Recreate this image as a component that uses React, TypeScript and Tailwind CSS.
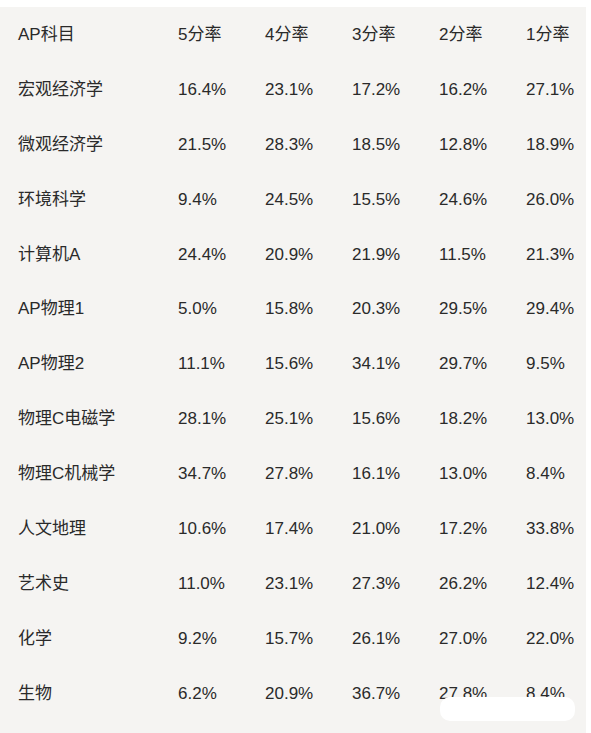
import React from "react";

const header = ["AP科目", "5分率", "4分率", "3分率", "2分率", "1分率"];
const rows: string[][] = [
  ["宏观经济学", "16.4%", "23.1%", "17.2%", "16.2%", "27.1%"],
  ["微观经济学", "21.5%", "28.3%", "18.5%", "12.8%", "18.9%"],
  ["环境科学", "9.4%", "24.5%", "15.5%", "24.6%", "26.0%"],
  ["计算机A", "24.4%", "20.9%", "21.9%", "11.5%", "21.3%"],
  ["AP物理1", "5.0%", "15.8%", "20.3%", "29.5%", "29.4%"],
  ["AP物理2", "11.1%", "15.6%", "34.1%", "29.7%", "9.5%"],
  ["物理C电磁学", "28.1%", "25.1%", "15.6%", "18.2%", "13.0%"],
  ["物理C机械学", "34.7%", "27.8%", "16.1%", "13.0%", "8.4%"],
  ["人文地理", "10.6%", "17.4%", "21.0%", "17.2%", "33.8%"],
  ["艺术史", "11.0%", "23.1%", "27.3%", "26.2%", "12.4%"],
  ["化学", "9.2%", "15.7%", "26.1%", "27.0%", "22.0%"],
  ["生物", "6.2%", "20.9%", "36.7%", "27.8%", "8.4%"],
];

export default function App() {
  const all = [header, ...rows];
  return (
    <div className="w-[591px] h-[733px] bg-white overflow-hidden">
      <div
        className="relative mt-[7px] mr-[5px] h-[726px] bg-[#f5f4f2] pl-[18px] text-[#2a2a2a] text-[17px] leading-none"
        style={{ fontFamily: '"Liberation Sans", "Noto Sans CJK SC", sans-serif' }}
      >
        {all.map((r, i) => (
          <div key={i} className="grid grid-cols-[160px_87px_87px_87px_87px_1fr] h-[54.9px] items-center">
            {r.map((c, j) => (
              <div key={j} className="whitespace-nowrap">{c}</div>
            ))}
          </div>
        ))}
        <div className="absolute left-[440px] top-[690px] w-[135px] h-[24px] rounded-[10px] bg-white" />
      </div>
    </div>
  );
}
